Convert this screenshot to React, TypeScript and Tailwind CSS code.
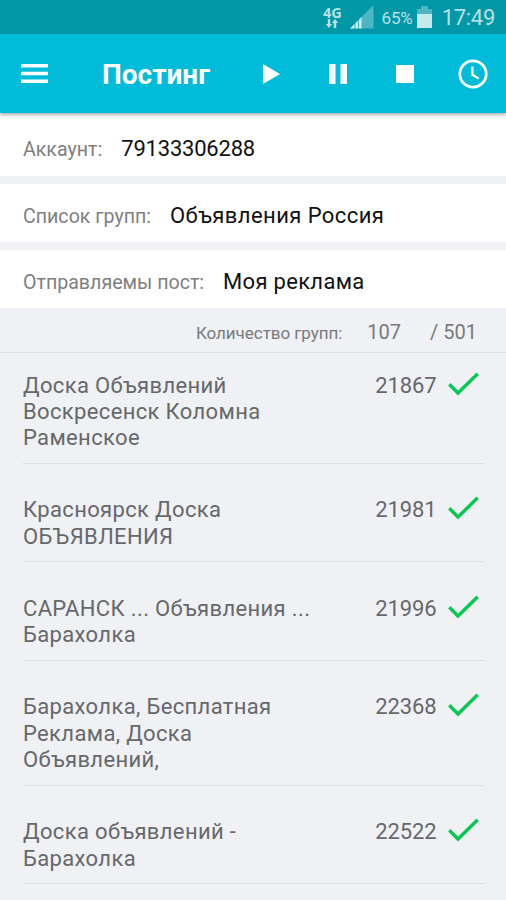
import React from 'react';

const groups = [
  { lines: ['Доска Объявлений', 'Воскресенск Коломна', 'Раменское'], count: 21867 },
  { lines: ['Красноярск Доска', 'ОБЪЯВЛЕНИЯ'], count: 21981 },
  { lines: ['САРАНСК ... Объявления ...', 'Барахолка'], count: 21996 },
  { lines: ['Барахолка, Бесплатная', 'Реклама, Доска', 'Объявлений,'], count: 22368 },
  { lines: ['Доска объявлений -', 'Барахолка'], count: 22522 }
];

const fields = [
  { label: 'Аккаунт:', value: '79133306288', spacing: 'tracking-[-0.2px]' },
  { label: 'Список групп:', value: 'Объявления Россия', spacing: 'tracking-[0.43px]' },
  { label: 'Отправляемы пост:', value: 'Моя реклама', spacing: 'tracking-[0.3px]' }
];

const StatusBar = () => (
  <div className="h-[34px] bg-[#0097a7] flex items-center justify-end pr-[11px] text-[#b8e0e4]">
    <div className="flex flex-col items-center w-5 mr-[8px]">
      <span className="font-['Open_Sans',sans-serif] text-[14.5px] leading-[13px] font-bold">4G</span>
      <svg className="w-[14px] h-[9px]" viewBox="0 0 14 9" fill="currentColor">
        <path d="M2.8 0h2.4v5h2L4 9 .8 5h2zM8.8 9h2.4V4h2L10 0 6.8 4h2z" />
      </svg>
    </div>
    <svg className="w-6 h-6 mr-[7px]" viewBox="0 0 24 24">
      <path d="M0 23.500L23.500 0v23.500z" fill="#4db6c1" />
      <path d="M0 23.500L11.500 12v11.500z" fill="#cdeaed" />
      <path d="M5 18v6M8.500 14v10" stroke="#0097a7" strokeWidth="0.700" />
    </svg>
    <span className="pt-[2px] text-[17px] leading-6 mr-[4px] tracking-[-0.1px]">65%</span>
    <svg className="w-[15px] h-[22px] mr-[10px]" viewBox="0 0 15 22">
      <path d="M4 0h7v3h4v19H0V3h4z" fill="#4db6c1" />
      <path d="M0 8h15v14H0z" fill="#c8e8eb" />
    </svg>
    <span className="pt-[2px] text-[22px] leading-6 tracking-[-0.3px]">17:49</span>
  </div>
);

const Toolbar = () => (
  <header className="relative h-[79px] bg-[#00bcd9] flex items-center pl-[21px] pr-[18px] text-white shadow-[0_2px_3px_rgba(0,0,0,0.3)]">
    <svg className="w-[27px] h-5" viewBox="0 0 27 20" fill="currentColor">
      <path d="M0 0h27v3.500H0zM0 7.800h27v3.500H0zM0 15.500h27V19H0z" />
    </svg>
    <h1 className="ml-[54px] w-[161px] pt-[2px] text-[28px] leading-8 font-bold">Постинг</h1>
    <svg className="w-[17px] h-5" viewBox="0 0 17 20" fill="currentColor">
      <path d="M0 0l17 10L0 20z" />
    </svg>
    <svg className="w-[18px] h-5 ml-[49px]" viewBox="0 0 18 20" fill="currentColor">
      <path d="M0 0h6.500v20H0zM11.500 0H18v20h-6.500z" />
    </svg>
    <svg className="w-[18px] h-[18px] ml-[49px]" viewBox="0 0 18 18" fill="currentColor">
      <path d="M0 0h18v18H0z" />
    </svg>
    <svg className="w-[30px] h-[30px] ml-auto" viewBox="0 0 30 30" fill="none" stroke="currentColor">
      <circle cx="15" cy="15" r="13.200" strokeWidth="2.800" />
      <path d="M14.500 7.500v8.300l6.300 3.800" strokeWidth="2.200" />
    </svg>
  </header>
);

const Check = () => (
  <svg className="w-[31px] h-6 shrink-0" viewBox="0 0 31 24" fill="none" stroke="#08c853" strokeWidth="3.400">
    <path d="M1.300 12.200l8.700 8.800L29.700 1.800" />
  </svg>
);

export default function App() {
  return (
    <div className="w-full h-[900px] overflow-hidden bg-[#eff1f5] font-['Roboto',sans-serif]">
      <StatusBar />
      <Toolbar />

      {/* Posting parameters */}
      <section className="flex flex-col gap-2">
        {fields.map((field) => (
          <div
            key={field.label}
            className="h-[58px] first:h-[63px] pt-[6px] first:pt-[9px] bg-white flex items-center pl-[23px]"
          >
            <div className="flex items-baseline">
              <span className="text-[19.6px] leading-6 text-[#808080]">{field.label}</span>
              <span className={`ml-[19px] text-[22px] leading-6 text-[#111] ${field.spacing}`}>{field.value}</span>
            </div>
          </div>
        ))}
      </section>

      <div className="h-[45px] border-b border-[#dcdfe2] flex items-baseline justify-end pr-[29px] pt-[12px] text-[#777a7d]">
        <span className="text-[17px] leading-6 tracking-[-0.05px]">Количество групп:</span>
        <span className="ml-[25px] text-[20px] leading-6">107</span>
        <span className="ml-[29px] text-[20px] leading-6">/ 501</span>
      </div>

      {/* Groups */}
      <ul className="pl-[23px] pr-[22px]">
        {groups.map((group) => (
          <li
            key={group.count}
            className="flex items-start pt-[33.5px] first:pt-[19.5px] pb-[11.2px] border-b border-[#dcdfe2] text-[22px] leading-[26.4px] text-[#66686b]"
          >
            <div className="flex-1 tracking-[0.35px]">
              {group.lines.map((line) => (
                <div key={line} className="whitespace-nowrap">{line}</div>
              ))}
            </div>
            <span className="mr-[11.5px] tracking-[-0.1px]">{group.count}</span>
            <div className="-mt-[1px] mr-[5px]">
              <Check />
            </div>
          </li>
        ))}
      </ul>
    </div>
  );
}
